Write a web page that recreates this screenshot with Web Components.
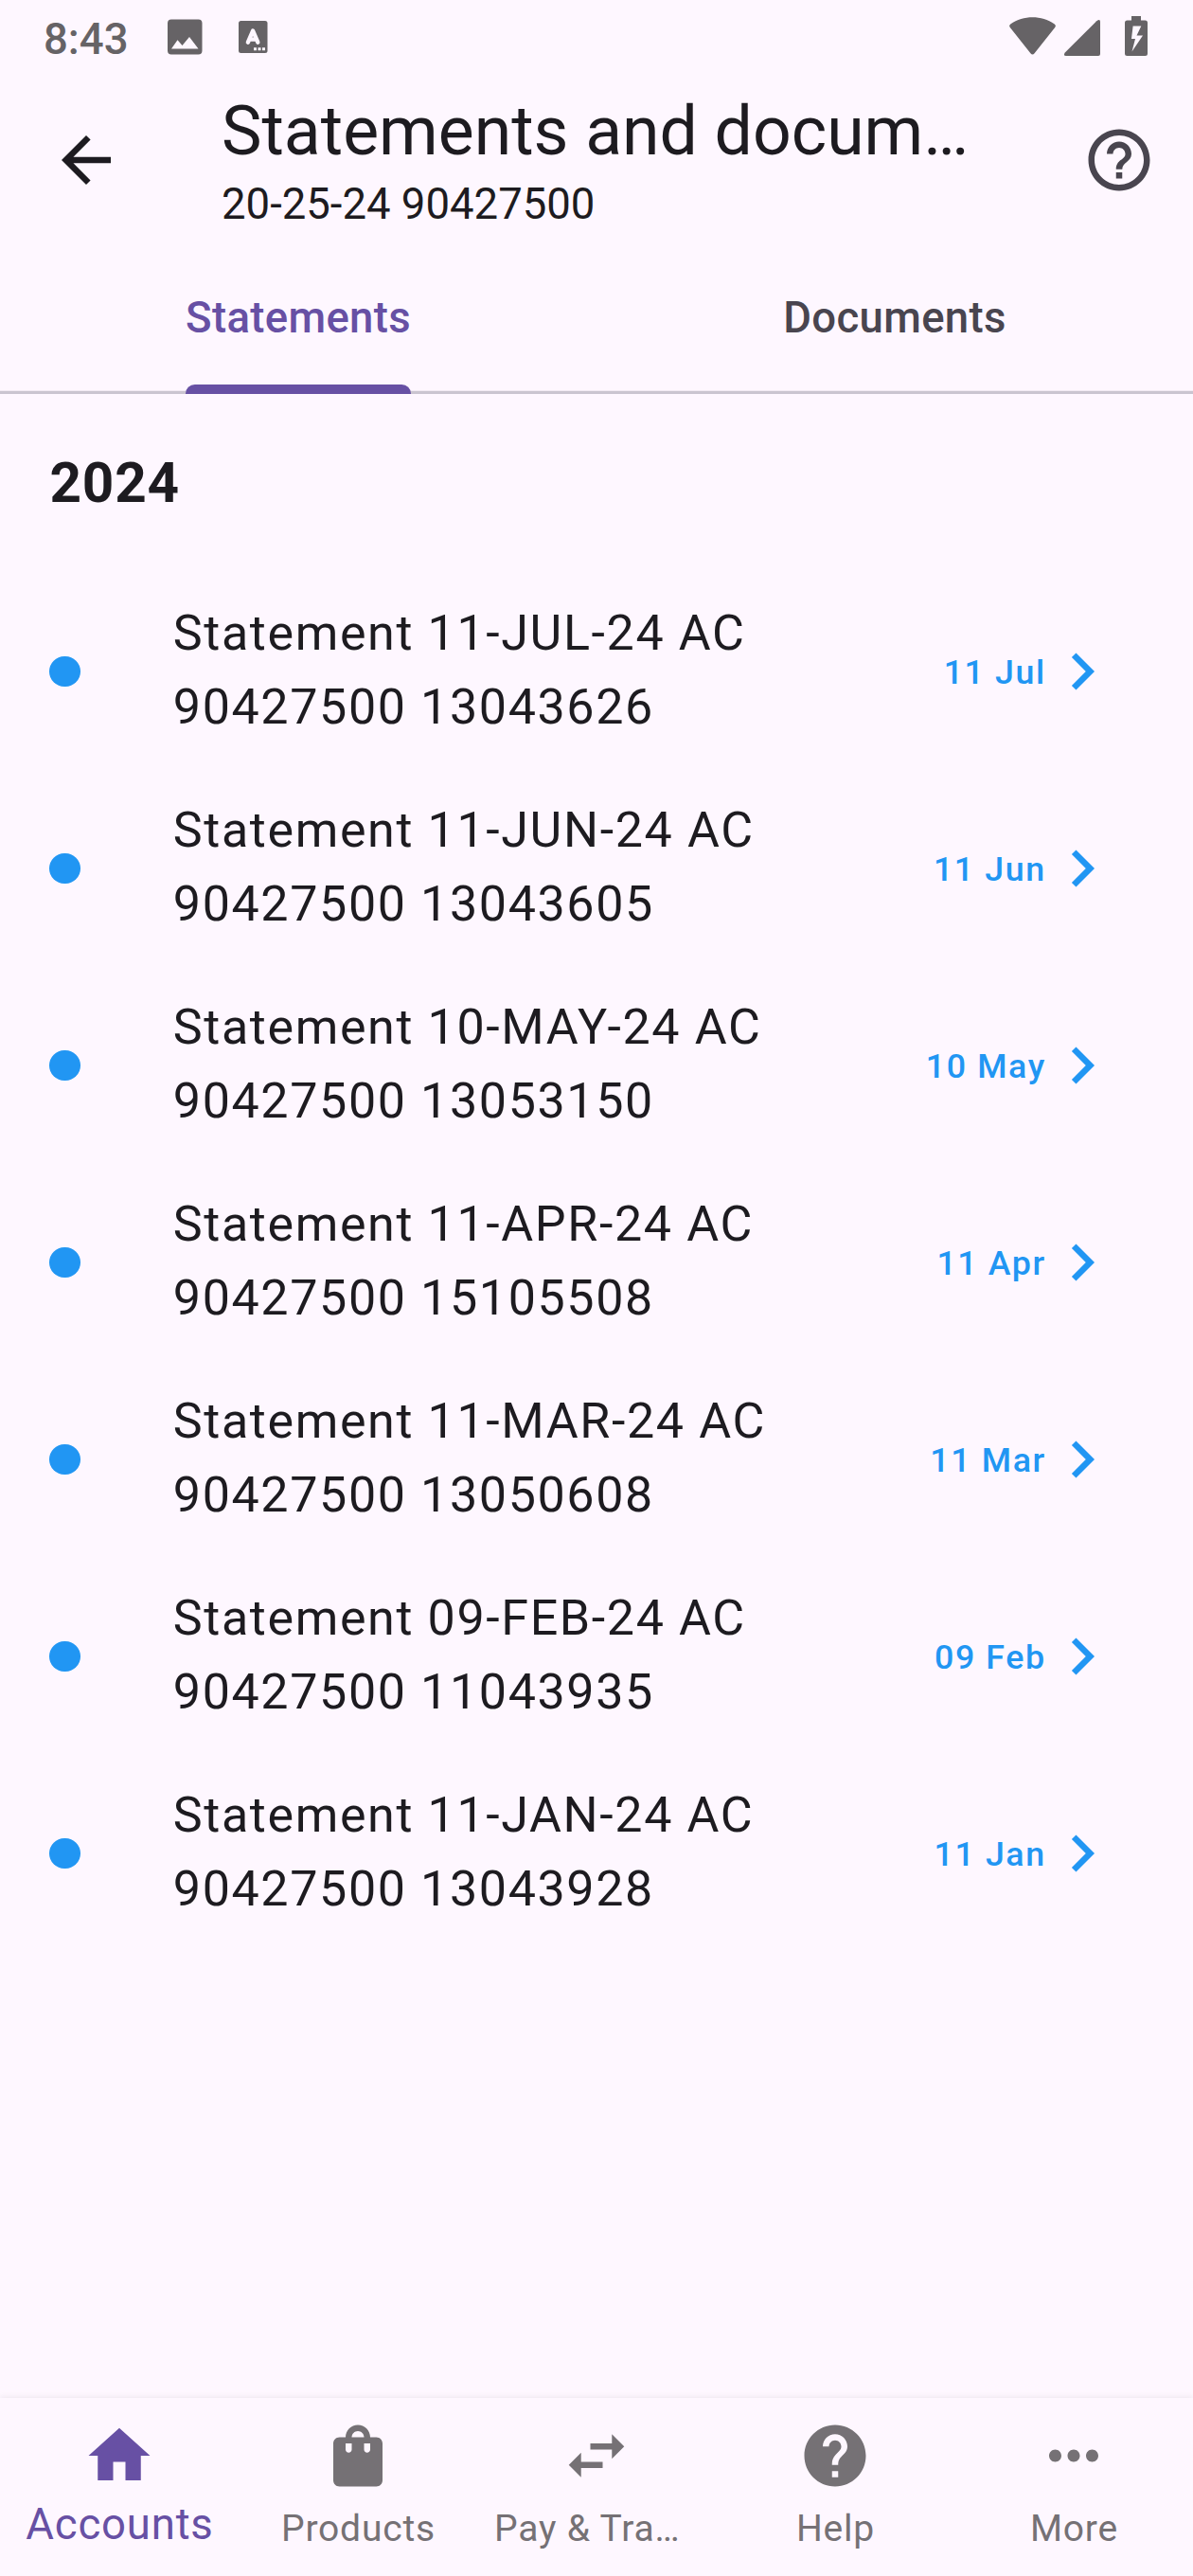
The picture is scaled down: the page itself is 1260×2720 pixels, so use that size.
<!DOCTYPE html>
<html lang="en">
<head>
<meta charset="utf-8">
<title>Statements and documents</title>
<style>
html, body { margin: 0; padding: 0; }
body { background: #FEF7FF; font-family: Roboto, sans-serif; color: #1D1B20; width: 1260px; height: 2720px; overflow: hidden; }
</style>
</head>
<body>
<statement-app></statement-app>
<script>
const define = (name, html) => {
  const t = document.createElement('template');
  t.innerHTML = html;
  customElements.define(name, class extends HTMLElement {
    constructor() {
      super();
      this.attachShadow({ mode: 'open' }).appendChild(t.content.cloneNode(true));
    }
  });
};

const ICONS = {
  back: '<path d="M20 11H7.83l5.59-5.59L12 4l-8 8 8 8 1.41-1.41L7.83 13H20v-2z"/>',
  helpOutline: '<path d="M11 18h2v-2h-2v2zm1-16C6.48 2 2 6.48 2 12s4.48 10 10 10 10-4.48 10-10S17.52 2 12 2zm0 18c-4.41 0-8-3.59-8-8s3.59-8 8-8 8 3.59 8 8-3.59 8-8 8zm0-14c-2.21 0-4 1.79-4 4h2c0-1.1.9-2 2-2s2 .9 2 2c0 2-3 1.75-3 5h2c0-2.25 3-2.5 3-5 0-2.21-1.79-4-4-4z"/>',
  chevron: '<path d="M10 6L8.59 7.41 13.17 12l-4.58 4.59L10 18l6-6z"/>',
  home: '<path d="M10 20v-6h4v6h5v-8h3L12 3 2 12h3v8z"/>',
  bag: '<path fill-rule="evenodd" d="M18 6h-2c0-2.21-1.79-4-4-4S8 3.79 8 6H6c-1.1 0-2 .9-2 2v12c0 1.1.9 2 2 2h12c1.1 0 2-.9 2-2V8c0-1.1-.9-2-2-2zm-8 4c0 .55-.45 1-1 1s-1-.45-1-1V8h2v2zm2-6c1.1 0 2 .9 2 2h-4c0-1.1.9-2 2-2zm4 6c0 .55-.45 1-1 1s-1-.45-1-1V8h2v2z"/>',
  swap: '<path d="M6.990 11L3 15l3.990 4v-3H14v-2H6.990v-3zM21 9l-3.990-4v3H10v2h7.010v3L21 9z"/>',
  help: '<path d="M12 2C6.480 2 2 6.480 2 12s4.480 10 10 10 10-4.480 10-10S17.520 2 12 2zm1 17h-2v-2h2v2zm2.070-7.750l-.9.920C13.450 12.900 13 13.500 13 15h-2v-.5c0-1.100.450-2.100 1.170-2.830l1.240-1.260c.370-.360.590-.860.590-1.410 0-1.100-.9-2-2-2s-2 .9-2 2H8c0-2.210 1.790-4 4-4s4 1.790 4 4c0 .880-.360 1.680-.930 2.250z"/>',
  more: '<path d="M6 10c-1.100 0-2 .9-2 2s.9 2 2 2 2-.9 2-2-.9-2-2-2zm12 0c-1.100 0-2 .9-2 2s.9 2 2 2 2-.9 2-2-.9-2-2-2zm-6 0c-1.100 0-2 .9-2 2s.9 2 2 2 2-.9 2-2-.9-2-2-2z"/>'
};

customElements.define('md-icon', class extends HTMLElement {
  constructor() { super(); this.attachShadow({ mode: 'open' }); }
  connectedCallback() {
    this.shadowRoot.innerHTML = `<style>:host{display:block;flex:none;width:78px;height:78px}svg{display:block;width:78px;height:78px;fill:currentColor}</style><svg viewBox="0 0 24 24">${ICONS[this.getAttribute('name')]}</svg>`;
  }
});

define('status-bar', `
<style>
:host { display: flex; height: 78px; color: #666366; fill: currentColor; }
.time { padding: 3px 0 0 46px; width: 130px; font-size: 45.5px; font-weight: 500; line-height: 78px; }
svg { display: block; height: 78px; flex: none; }
.gap { flex: 1; }
</style>
<span class="time">8:43</span>
<svg width="114" viewBox="176 0 114 78">
  <path fill-rule="evenodd" d="M181 20.500H209.500Q213.500 20.500 213.500 24.500V53.500Q213.500 57.500 209.500 57.500H181Q177 57.500 177 53.500V24.500Q177 20.500 181 20.500ZM181 51.500H209.500L200 39L192.500 48L187.500 42.300Z"/>
  <path d="M254.500 22H280Q282.500 22 282.500 24.500V53.500Q282.500 56 280 56H254.500Q252 56 252 53.500V24.500Q252 22 254.500 22Z"/>
  <path d="M261.900 44.700L267.100 32.500L272.300 44.700M263.800 41.600H270.400" fill="none" stroke="#FEF7FF" stroke-width="4.400" stroke-linecap="round" stroke-linejoin="round"/>
  <path d="M268 50.300h3v3h-3zm4.500 0h3v3h-3zm4.500 0h3v3h-3z" fill="#FEF7FF"/>
</svg>
<span class="gap"></span>
<svg width="200" viewBox="1060 0 200 78">
  <path d="M1066.600 28.800Q1065.200 27 1067.200 25.600C1081 15.900 1100 15.900 1113.800 25.600Q1115.800 27 1114.400 28.800L1092.600 56.200Q1090.500 58.700 1088.400 56.200Z"/>
  <path d="M1158.200 22.200Q1162 19.200 1162 23V57Q1162 59 1160 59H1126Q1122.500 59 1124.800 55.500Z"/>
  <path fill-rule="evenodd" d="M1195 17H1205V21.500H1209.500Q1212 21.500 1212 24V56.500Q1212 59 1209.500 59H1190.500Q1188 59 1188 56.500V24Q1188 21.500 1190.500 21.500H1195ZM1196.600 27.500L1195 41H1199L1195.500 54.500L1207 37.500H1200.500L1205.300 27.500Z"/>
</svg>`);

define('app-header', `
<style>
:host { display: flex; align-items: center; height: 182px; padding: 0 39px 0 52px; box-sizing: border-box; }
.text { flex: 1; padding-left: 104px; display: flex; flex-direction: column; white-space: nowrap; }
.title { font-size: 71.5px; line-height: 91px; padding-top: 2px; }
.sub { font-size: 45.5px; line-height: 65px; margin-top: -1px; }
.help { color: #49454F; }
</style>
<md-icon name="back"></md-icon>
<div class="text"><div class="title"><slot name="title"></slot></div><div class="sub"><slot name="sub"></slot></div></div>
<md-icon class="help" name="helpOutline"></md-icon>`);

define('tab-bar', `
<style>
:host { display: flex; height: 156px; box-shadow: inset 0 -3.25px #CAC4D0; }
</style><slot></slot>`);

define('tab-item', `
<style>
:host { flex: 1; display: flex; justify-content: center; font-size: 45.5px; font-weight: 500; letter-spacing: 0.325px; color: #49454F; }
.box { display: flex; flex-direction: column; }
.label { line-height: 152px; height: 146px; }
.bar { height: 10px; border-radius: 9.75px 9.75px 0 0; }
:host([active]) { color: #6750A4; }
:host([active]) .bar { background: #6750A4; }
</style>
<div class="box"><div class="label"><slot></slot></div><div class="bar"></div></div>`);

define('year-heading', `
<style>
:host { display: block; height: 189px; box-sizing: border-box; padding: 55px 52.4px 0; font-size: 58.5px; font-weight: 700; line-height: 78px; letter-spacing: 0.8125px; }
</style><slot></slot>`);

define('statement-row', `
<style>
:host { display: flex; align-items: center; height: 208px; padding: 0 78px 0 52px; box-sizing: border-box; }
.dot { width: 32.5px; height: 32.5px; border-radius: 50%; background: #2196F3; flex: none; }
.name { flex: 1; padding: 0 0 3px 98.3px; font-size: 52px; line-height: 78px; letter-spacing: 1.625px; }
.date { font-size: 35.75px; font-weight: 500; line-height: 52px; padding-top: 2px; margin-right: -0.8px; letter-spacing: 1.625px; color: #2196F3; }
md-icon { color: #2196F3; }
</style>
<span class="dot"></span>
<div class="name"><slot></slot></div>
<div class="date"><slot name="date"></slot></div>
<md-icon name="chevron"></md-icon>`);

define('nav-bar', `
<style>
:host { display: flex; height: 188.5px; box-shadow: 0 -1px 6px rgba(0,0,0,.07); background: #FEF7FF; }
</style><slot></slot>`);

customElements.define('nav-item', class extends HTMLElement {
  constructor() { super(); this.attachShadow({ mode: 'open' }); }
  connectedCallback() {
    this.shadowRoot.innerHTML = `<style>
:host { flex: 1 1 0; min-width: 0; display: flex; flex-direction: column; align-items: center; padding-top: 22.75px; color: #757175; }
:host([active]) { color: #6750A4; }
.label { font-size: 39px; line-height: 46px; letter-spacing: 0.8125px; padding: 15px 0 0 1px; white-space: nowrap; }
:host([active]) .label { font-size: 45.5px; line-height: 52px; padding-top: 8px; }
:host([clipped]) .label { width: 217px; }
</style><md-icon name="${this.getAttribute('icon')}"></md-icon><div class="label"><slot></slot></div>`;
  }
});

define('statement-app', `
<style>
:host { display: flex; flex-direction: column; width: 1260px; height: 2720px; }
.list { flex: 1; }
</style>
<status-bar></status-bar>
<app-header><span slot="title">Statements and docum…</span><span slot="sub">20-25-24 90427500</span></app-header>
<tab-bar><tab-item active>Statements</tab-item><tab-item>Documents</tab-item></tab-bar>
<div class="list">
<year-heading>2024</year-heading>
<statement-row>Statement 11-JUL-24 AC<br>90427500 13043626<span slot="date">11 Jul</span></statement-row>
<statement-row>Statement 11-JUN-24 AC<br>90427500 13043605<span slot="date">11 Jun</span></statement-row>
<statement-row>Statement 10-MAY-24 AC<br>90427500 13053150<span slot="date">10 May</span></statement-row>
<statement-row>Statement 11-APR-24 AC<br>90427500 15105508<span slot="date">11 Apr</span></statement-row>
<statement-row>Statement 11-MAR-24 AC<br>90427500 13050608<span slot="date">11 Mar</span></statement-row>
<statement-row>Statement 09-FEB-24 AC<br>90427500 11043935<span slot="date">09 Feb</span></statement-row>
<statement-row>Statement 11-JAN-24 AC<br>90427500 13043928<span slot="date">11 Jan</span></statement-row>
</div>
<nav-bar>
<nav-item icon="home" active>Accounts</nav-item>
<nav-item icon="bag">Products</nav-item>
<nav-item icon="swap" clipped>Pay &amp; Tra…</nav-item>
<nav-item icon="help">Help</nav-item>
<nav-item icon="more">More</nav-item>
</nav-bar>`);
</script>
</body>
</html>
